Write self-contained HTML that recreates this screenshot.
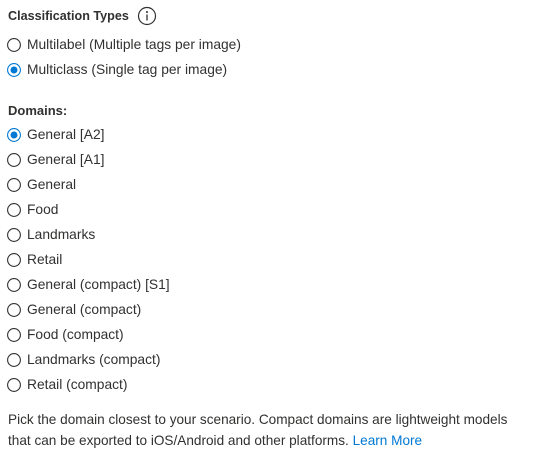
<!DOCTYPE html>
<html><head><style>
body{margin:0;background:#fff;font-family:"Liberation Sans",sans-serif;font-size:13.8px;color:#323130;}
.a{position:absolute;left:0;white-space:nowrap;}
.r{position:absolute;left:7px;width:14px;height:14px;}
.t{position:absolute;left:27px;line-height:16px;white-space:nowrap;}
</style></head><body>
<div class="a" style="left:8px;top:7px;font-weight:bold;font-size:12.6px;line-height:18px;">Classification Types</div>
<svg style="position:absolute;left:137px;top:6px" width="20" height="20"><circle cx="10" cy="10" r="8.5" fill="none" stroke="#323130" stroke-width="1.2"/><circle cx="10" cy="6" r="1" fill="#323130"/><line x1="10" y1="8.5" x2="10" y2="14.5" stroke="#323130" stroke-width="1.3"/></svg>
<div id="c"></div>
<div class="a" style="left:8px;top:103px;font-weight:bold;font-size:13px;line-height:16px;">Domains:</div>
<div class="a" style="left:8px;top:409px;line-height:21px;font-size:13.6px;">Pick the domain closest to your scenario. Compact domains are lightweight models<br>that can be exported to iOS/Android and other platforms. <span style="color:#0078d4">Learn More</span></div>
<script>
var items=[[45,"Multilabel (Multiple tags per image)",0],[70,"Multiclass (Single tag per image)",1],[135,"General [A2]",1],[160,"General [A1]",0],[185,"General",0],[210,"Food",0],[235,"Landmarks",0],[260,"Retail",0],[285,"General (compact) [S1]",0],[310,"General (compact)",0],[335,"Food (compact)",0],[360,"Landmarks (compact)",0],[385,"Retail (compact)",0]];
var h="";
items.forEach(function(i){
h+='<svg class="r" style="top:'+(i[0]-7)+'px" viewBox="0 0 14 14"><circle cx="7" cy="7" r="6.4" fill="none" stroke="'+(i[2]?'#0078d4':'#323130')+'" stroke-width="1.1"/>'+(i[2]?'<circle cx="7" cy="7" r="3.5" fill="#0078d4"/>':'')+'</svg>';
h+='<div class="t" style="top:'+(i[0]-8)+'px">'+i[1]+'</div>';
});
document.getElementById("c").innerHTML=h;
</script>
</body></html>
